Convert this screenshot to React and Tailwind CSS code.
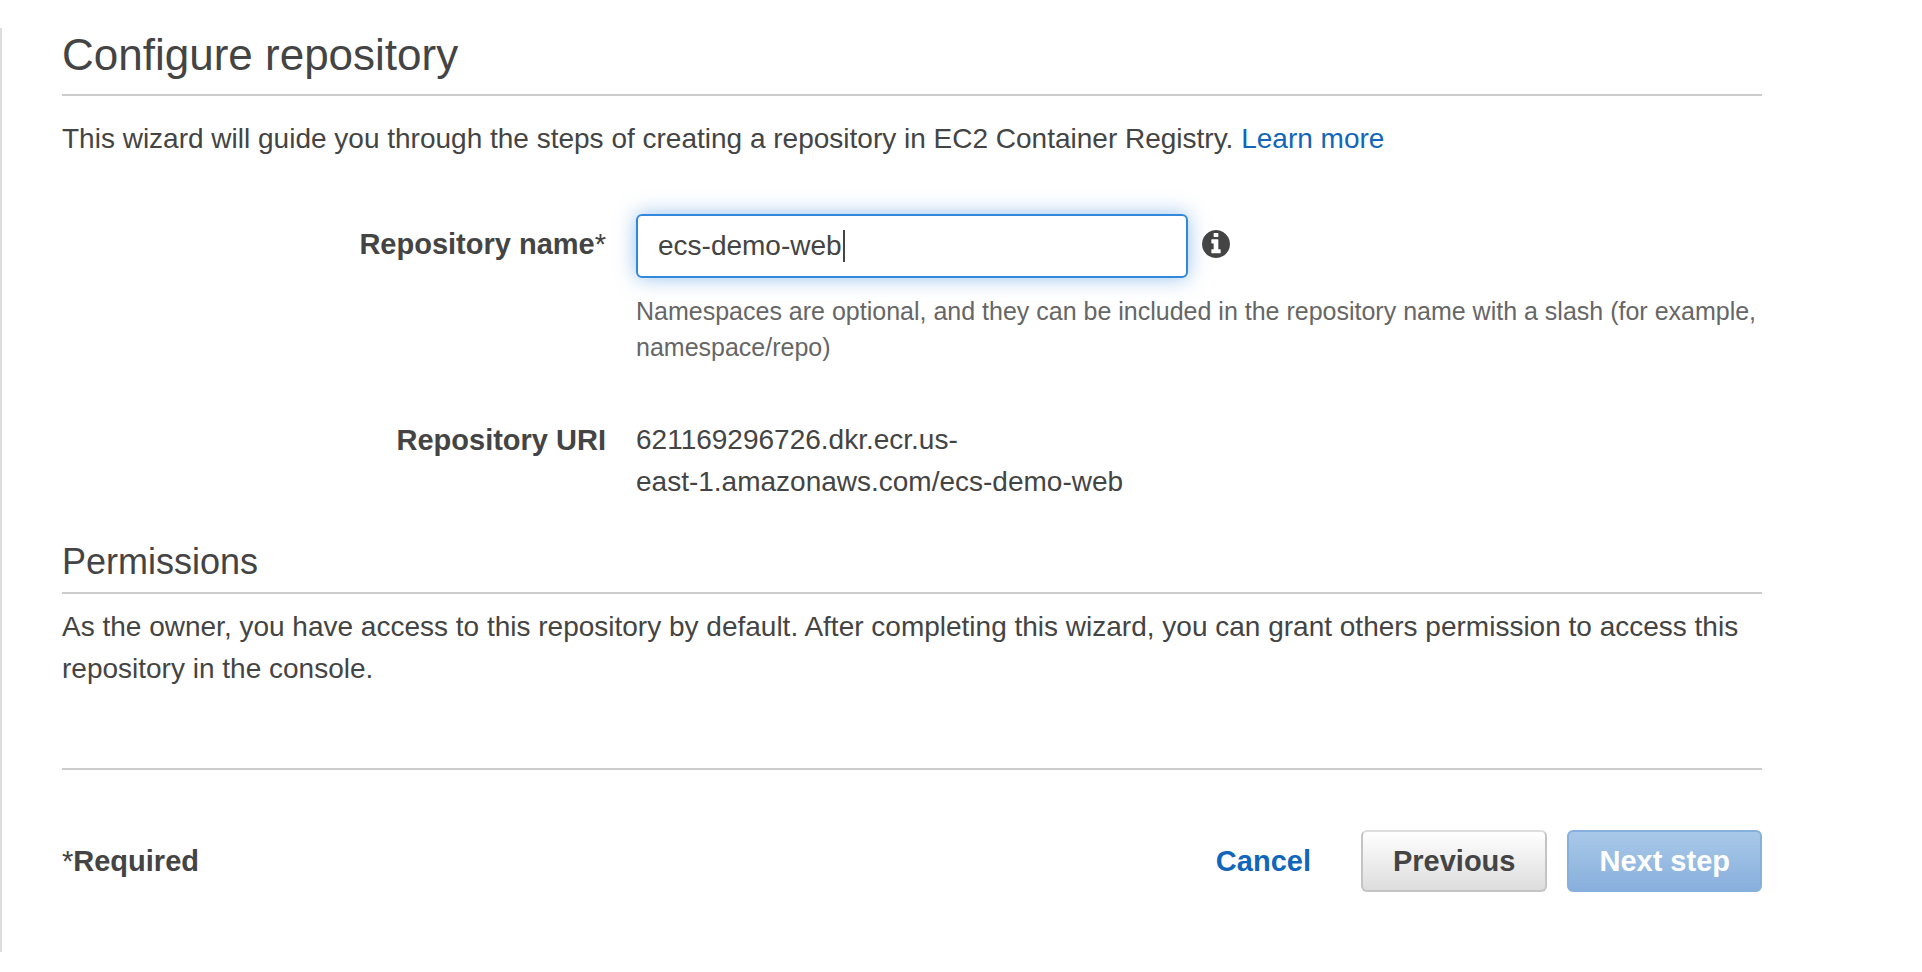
import { useState } from "react";

function InfoIcon() {
  return (
    <svg viewBox="0 128 1536 1536" fill="currentColor" className="size-7" aria-hidden="true">
      <path d="M1024 1376v-160q0-14-9-23t-23-9h-96v-512q0-14-9-23t-23-9h-320q-14 0-23 9t-9 23v160q0 14 9 23t23 9h96v320h-96q-14 0-23 9t-9 23v160q0 14 9 23t23 9h448q14 0 23-9t9-23zm-128-896v-160q0-14-9-23t-23-9h-192q-14 0-23 9t-9 23v160q0 14 9 23t23 9h192q14 0 23-9t9-23zm640 416q0 209-103 385.5t-279.5 279.5-385.5 103-385.5-103-279.5-279.5-103-385.5 103-385.5 279.5-279.5 385.5-103 385.5 103 279.5 279.5 103 385.5z" />
    </svg>
  );
}

function Field({ label, children }) {
  return (
    <div className="flex items-start gap-[30px]">
      <div className="w-[32%] shrink-0 text-right text-[29px] leading-[42px] font-bold">{label}</div>
      <div className="min-w-0 flex-1">{children}</div>
    </div>
  );
}

export default function App() {
  const [name, setName] = useState("ecs-demo-web");

  return (
    <div className="bg-white pt-7 font-['Liberation_Sans',Arial,sans-serif] text-[28px] leading-[42px] text-[#444444]">
      <main className="border-l-2 border-[#dddddd] pr-40 pb-[60px] pl-[60px]">
        <h1 className="border-b-2 border-[#cccccc] pb-3 text-[44px] leading-[54px]">Configure repository</h1>
        <p className="mt-[22px]">
          This wizard will guide you through the steps of creating a repository in EC2 Container Registry.{" "}
          <a href="#learn-more" className="text-[#1166bb]">Learn more</a>
        </p>

        <form onSubmit={(e) => e.preventDefault()}>
          <div className="mt-[54px]">
            <Field
              label={
                <label htmlFor="repository-name" className="block pt-[9px]">
                  Repository name<span className="font-normal">*</span>
                </label>
              }
            >
              <div className="flex items-center gap-[14px]">
                <div className="relative w-[552px]">
                  <input
                    id="repository-name"
                    type="text"
                    value={name}
                    onChange={(e) => setName(e.target.value)}
                    aria-describedby="repository-help"
                    className="block h-16 w-full rounded-md border-2 border-[#3388dd] bg-white px-5 caret-transparent shadow-[0_0_20px_rgba(51,136,221,0.5)] outline-none"
                  />
                  <span className="absolute top-4 left-[207px] h-8 w-0.5 bg-[#444444]" />
                </div>
                <button type="button" aria-label="Repository name info" className="-mt-1">
                  <InfoIcon />
                </button>
              </div>
              <p id="repository-help" className="mt-[15px] text-[25px] leading-9 text-[#666666]">
                Namespaces are optional, and they can be included in the repository name with a slash (for example, namespace/repo)
              </p>
            </Field>
          </div>

          <div className="mt-[54px]">
            <Field label="Repository URI">
              <p className="max-w-[552px]">
                621169296726.dkr.ecr.us-<span className="whitespace-nowrap">east-1.amazonaws.com/ecs-demo-web</span>
              </p>
            </Field>
          </div>

          <h2 className="mt-[35px] border-b-2 border-[#cccccc] pb-1.5 text-4xl leading-[48px]">Permissions</h2>
          <p className="mt-3">
            As the owner, you have access to this repository by default. After completing this wizard, you can grant others permission to access this repository in the console.
          </p>

          <div className="mt-[78px] flex items-center border-t-2 border-[#cccccc] pt-[60px] text-[29px] font-bold">
            <span className="mr-auto">
              <span className="font-normal">*</span>Required
            </span>
            <a href="#cancel" className="mr-[50px] text-[#1166bb]">Cancel</a>
            <button
              type="button"
              className="mr-5 h-[62px] rounded-md border-2 border-[#c4c4c4] border-t-[#dddddd] bg-linear-to-b from-white to-[#dddddd] px-[30px] font-bold"
            >
              Previous
            </button>
            <button
              type="submit"
              className="h-[62px] rounded-md border-2 border-[#88b0dd] bg-linear-to-b from-[#a8c8e8] to-[#88b0dd] px-[30px] font-bold text-white"
            >
              Next step
            </button>
          </div>
        </form>
      </main>
    </div>
  );
}
